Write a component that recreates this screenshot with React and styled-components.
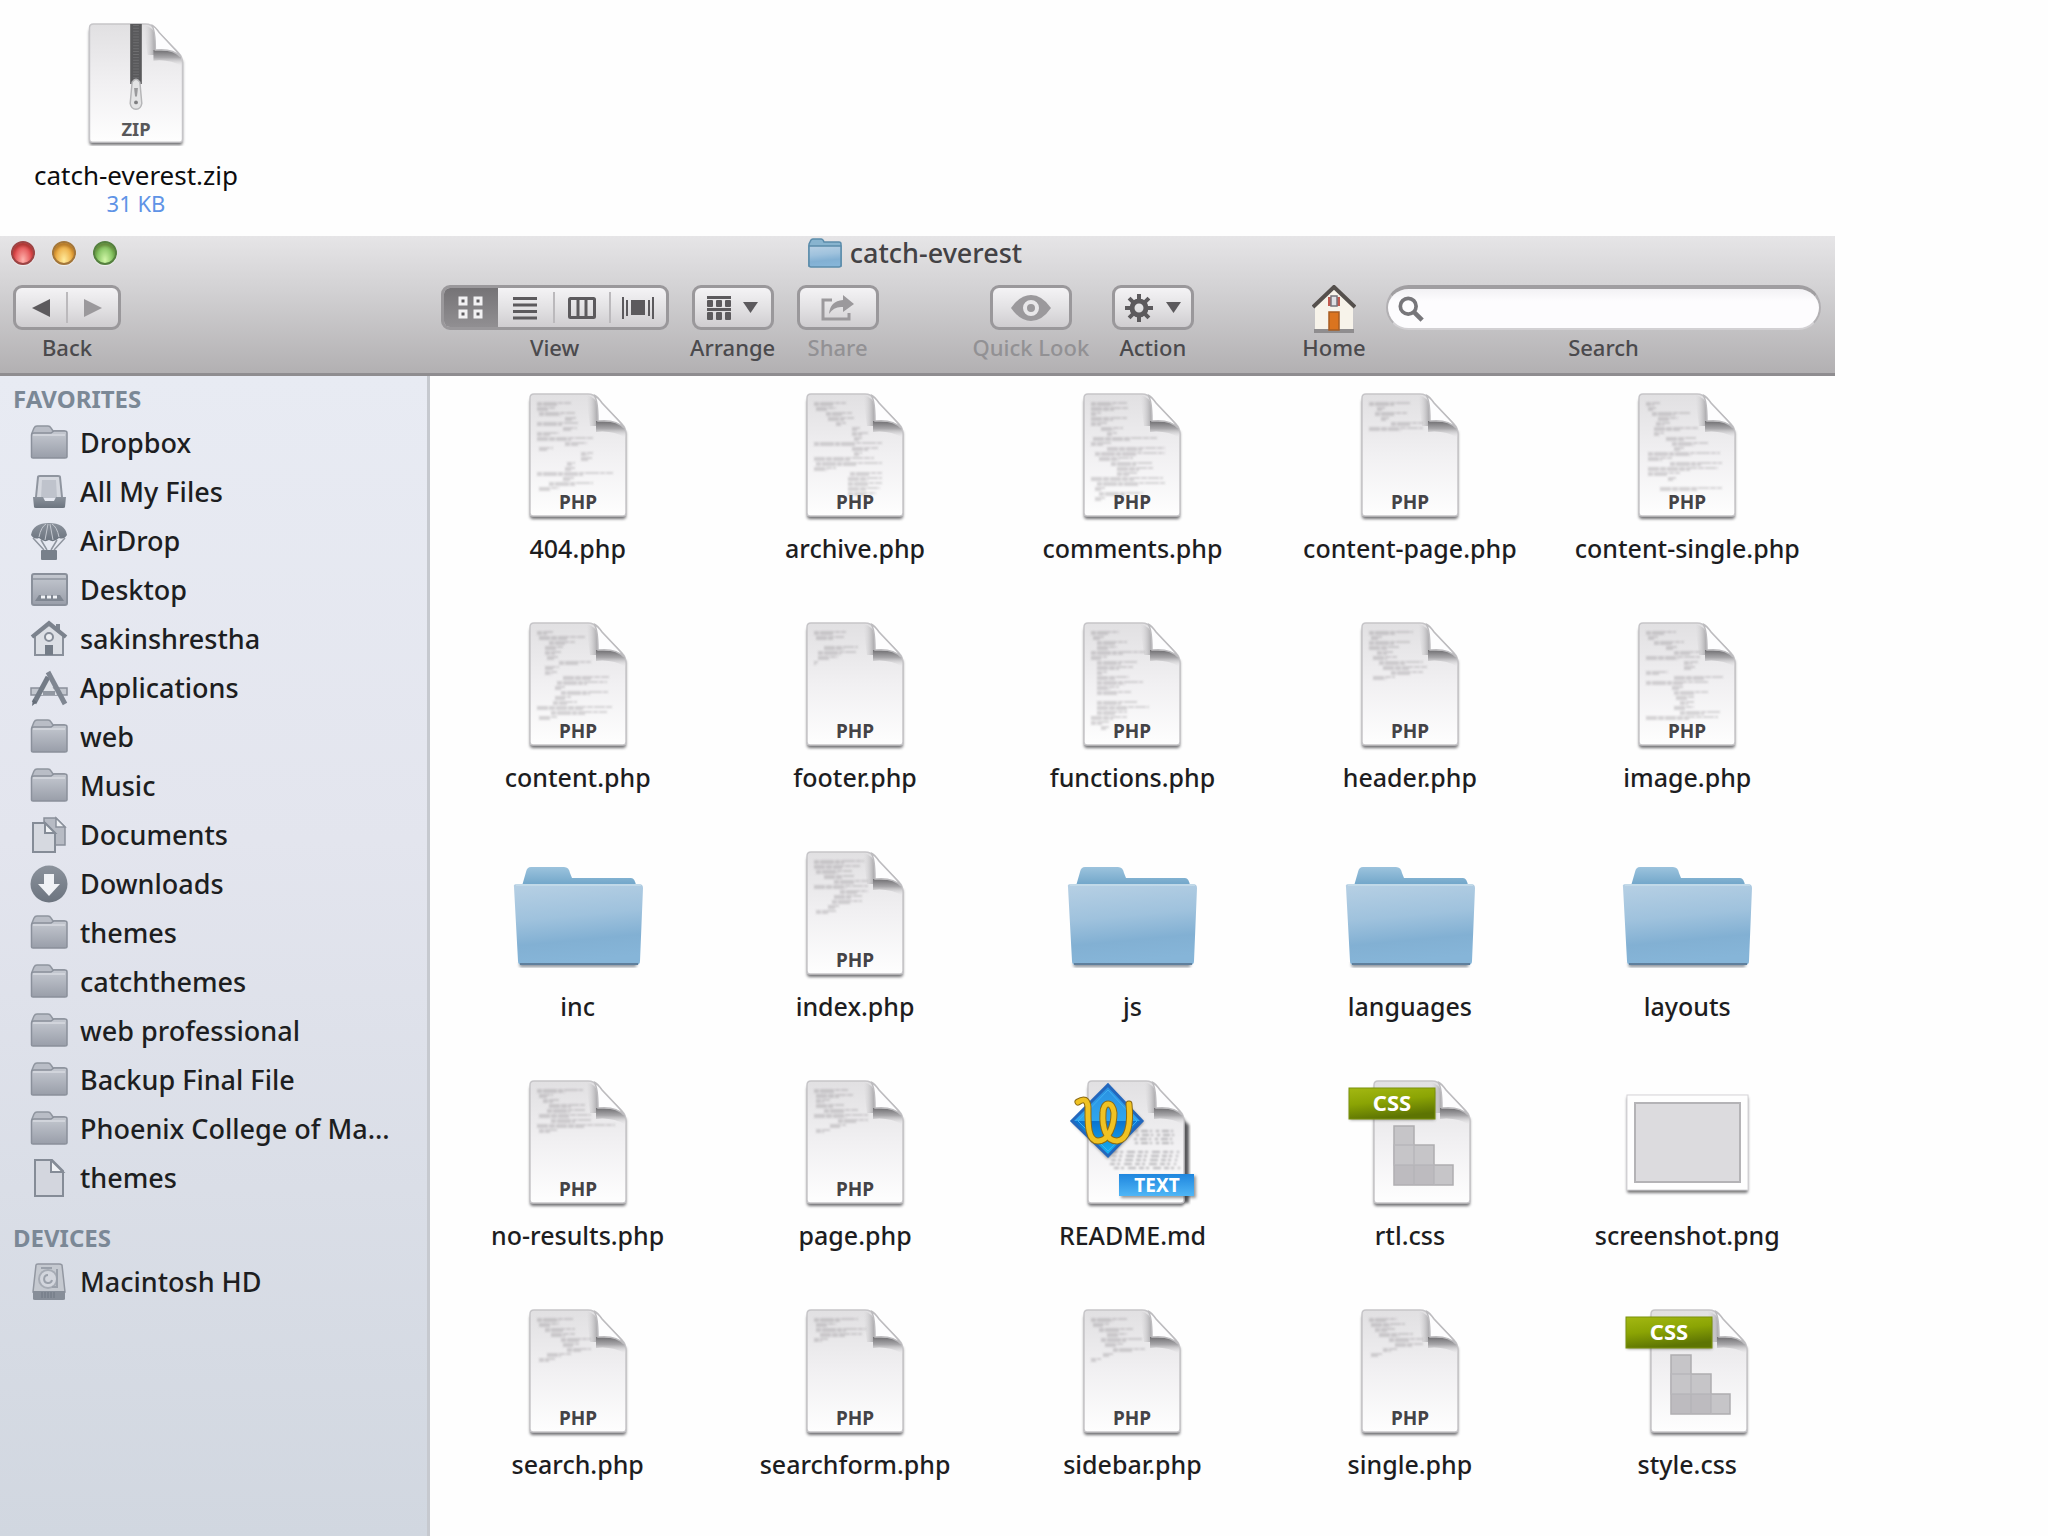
import styled, { createGlobalStyle } from "styled-components";
import { useState } from "react";

const GlobalStyle = createGlobalStyle`
  * {
    box-sizing: border-box;
  }
  body {
    margin: 0;
    background: #fefefe;
    font-family: "Lucida Grande", "Noto Sans", "Open Sans", sans-serif;
    color: #1a1a1c;
  }
`;

const Page = styled.div`
  display: flex;
  flex-direction: column;
  min-height: 100vh;
`;

const Archive = styled.a`
  display: flex;
  flex-direction: column;
  align-items: center;
  width: 272px;
  height: 236px;
  padding-top: 22px;
  color: #0c0c0e;
  font-size: 26px;
  line-height: 32px;
  text-decoration: none;
`;

const ArchiveIcon = styled.svg`
  width: 124px;
  height: 124px;
  margin-bottom: 13px;
`;

const ArchiveSize = styled.span`
  color: #5f93e6;
  font-size: 22px;
  line-height: 24px;
`;

const Window = styled.main`
  display: flex;
  flex-direction: column;
  flex: 1;
  width: 89.6%;
`;

const Header = styled.header`
  height: 140px;
  border-bottom: 3px solid #8f8d90;
  background: linear-gradient(#e6e5e7, #d2d1d3 40%, #b2b0b2);
`;

const TitleBar = styled.div`
  display: grid;
  grid-template-columns: 1fr auto 1fr;
  align-items: center;
  height: 34px;
  padding: 0 16px 0 11px;
`;

const Lights = styled.div`
  display: flex;
  gap: 17px;
`;

const Light = styled.button`
  width: 24px;
  height: 24px;
  padding: 0;
  border: 2px solid ${(p) => p.$edge};
  border-radius: 50%;
  background: radial-gradient(ellipse at 50% 85%, ${(p) => p.$glow}, ${(p) => p.$color} 65%);
  box-shadow: inset 0 3px 3px rgba(60, 20, 0, 0.3), 0 1px 1px rgba(255, 255, 255, 0.6);
`;

const Title = styled.h1`
  display: flex;
  align-items: center;
  gap: 8px;
  margin: 0;
  color: #434245;
  font-size: 27px;
  font-weight: 500;
  line-height: 32px;
`;

const TitleIcon = styled.svg`
  width: 34px;
  height: 30px;
`;

const Toolbar = styled.div`
  display: flex;
  padding: 15px 14px 0 13px;
`;

const Spacer = styled.div`
  flex: ${(p) => p.$grow} 1 0;
`;

const Cluster = styled.div`
  display: flex;
  gap: ${(p) => p.$gap || 23}px;
  flex: ${(p) => (p.$grow ? `${p.$grow} 1 0` : "none")};
`;

const Tool = styled.div`
  display: flex;
  flex-direction: column;
  align-items: center;
  width: ${(p) => (p.$width ? p.$width + "px" : "auto")};
  flex: ${(p) => (p.$width ? "none" : 1)};
`;

const ToolLabel = styled.label`
  margin-top: 1px;
  color: ${(p) => (p.$off ? "#929194" : "#4b4a4d")};
  font-size: 22px;
  font-weight: 500;
  line-height: 32px;
  white-space: nowrap;
`;

const Bezel = styled.div`
  display: flex;
  width: 100%;
  height: 45px;
  overflow: hidden;
  border: 3px solid #9a989b;
  border-radius: 9px;
  background: linear-gradient(#f4f3f5, #e3e2e4 50%, #cfcdd0);
`;

const ToolButton = styled.button`
  display: flex;
  align-items: center;
  justify-content: center;
  gap: 12px;
  flex: 1;
  min-width: 0;
  padding: 0;
  border: 0;
  color: ${(p) => (p.$on ? "#f2f1f3" : p.$off ? "#9b999c" : "#5c5a5d")};
  background: ${(p) => (p.$on ? "linear-gradient(#757376, #918f92)" : "none")};
`;

const Divider = styled.span`
  width: 2px;
  margin: 4px 0;
  background: #bbb9bc;
`;

const HomeButton = styled.button`
  height: 45px;
  padding: 0;
  border: 0;
  background: none;
`;

const SearchField = styled.div`
  display: flex;
  align-items: center;
  width: 100%;
  height: 45px;
  padding: 0 10px;
  border: 2px solid #b2b0b3;
  border-top: 4px solid #a09ea1;
  border-bottom-color: #d2d0d3;
  border-radius: 23px;
  background: linear-gradient(#f2f1f4, #fdfcfe 30%);
`;

const SearchInput = styled.input`
  flex: 1;
  min-width: 0;
  height: 36px;
  border: 0;
  outline: 0;
  background: none;
  font: inherit;
  font-size: 22px;
`;

const Body = styled.div`
  display: flex;
  flex: 1;
`;

const Sidebar = styled.nav`
  flex: none;
  width: 430px;
  padding-top: 4px;
  border-right: 3px solid #c6c9cf;
  background: linear-gradient(#e8ebf3, #e3e5ee 40%, #d1d7e0);
`;

const SideTitle = styled.h2`
  margin: ${(p) => (p.$spaced ? "17px" : "0")} 0 0;
  padding-left: 13px;
  color: #7b8896;
  font-size: 24px;
  font-weight: 700;
  line-height: 38px;
`;

const SideList = styled.ul`
  margin: 0;
  padding: 0;
  list-style: none;
`;

const SideLink = styled.a`
  display: flex;
  align-items: center;
  gap: 12px;
  height: 49px;
  padding: 0 30px;
  color: #1d1e21;
  font-size: 27px;
  font-weight: 500;
  line-height: 32px;
  text-decoration: none;
  white-space: nowrap;
`;

const SideIcon = styled.svg`
  flex: none;
  width: 38px;
  height: 38px;
`;

const Files = styled.ul`
  flex: 1;
  display: grid;
  grid-template-columns: repeat(5, 1fr);
  align-content: start;
  row-gap: 53px;
  margin: 0;
  padding: 16px 9px 0 9px;
  list-style: none;
`;

const FileLink = styled.a`
  display: flex;
  flex-direction: column;
  align-items: center;
  gap: 12px;
  height: 176px;
  color: #1d1d1f;
  font-size: 25px;
  font-weight: 500;
  line-height: 32px;
  text-decoration: none;
  white-space: nowrap;
`;

const FileIcon = styled.svg`
  width: 128px;
  height: 128px;
  overflow: visible;
`;

const SharedDefs = styled.svg`
  display: block;
  width: 0;
  height: 0;
`;

const ICON_FONT = '"Lucida Grande", "Noto Sans", sans-serif';

/* each pair is [indent, length] of one line of code on the page preview */
const files = [
  { name: "404.php", code: [[0, 34], [0, 18], [2, 36], [28, 12], [0, 42], [26, 14], [0, 22], [0, 56], [28, 22], [2, 14], [44, 12], [44, 12], [30, 8], [28, 10], [0, 76], [26, 12], [12, 44], [2, 20]] },
  { name: "archive.php", code: [[0, 32], [2, 20], [12, 26], [14, 26], [22, 10], [38, 8], [38, 32], [40, 8], [0, 68], [38, 26], [40, 8], [0, 60], [2, 66], [0, 22], [36, 32], [34, 34], [34, 34], [34, 32], [34, 28]] },
  { name: "comments.php", code: [[0, 36], [0, 38], [0, 10], [0, 36], [0, 16], [10, 22], [16, 10], [2, 64], [0, 20], [16, 58], [4, 70], [8, 34], [20, 42], [26, 36], [26, 20], [0, 72], [6, 68], [4, 10], [8, 44], [4, 10]] },
  { name: "content-page.php", code: [[0, 42], [8, 8], [6, 32], [12, 8], [22, 38], [0, 70]] },
  { name: "content-single.php", code: [[0, 14], [2, 8], [6, 38], [12, 20], [10, 14], [8, 44], [8, 10], [20, 30], [26, 36], [28, 10], [2, 72], [2, 24], [24, 52], [2, 70], [2, 32], [22, 8], [0, 0], [14, 62]] },
  { name: "content.php", code: [[0, 16], [2, 46], [12, 26], [8, 18], [8, 16], [10, 12], [22, 46], [8, 14], [8, 12], [26, 46], [20, 50], [18, 10], [24, 48], [18, 16], [16, 24], [0, 76], [14, 56], [2, 18]] },
  { name: "footer.php", code: [[0, 32], [2, 28], [0, 0], [10, 34], [4, 38], [4, 20], [0, 4]] },
  { name: "functions.php", code: [[0, 28], [2, 12], [6, 30], [6, 20], [0, 62], [0, 16], [6, 40], [6, 36], [6, 10], [6, 32], [6, 46], [6, 22], [6, 34], [0, 0], [6, 40], [6, 52], [6, 30], [0, 36], [0, 18], [10, 8]] },
  { name: "header.php", code: [[0, 44], [2, 12], [0, 42], [0, 30], [8, 16], [4, 24], [10, 60], [14, 44], [22, 32], [4, 22]] },
  { name: "image.php", code: [[0, 30], [2, 10], [8, 30], [20, 12], [28, 38], [0, 60], [38, 14], [38, 12], [0, 22], [28, 50], [0, 62], [26, 12], [28, 34], [30, 18], [34, 14], [28, 20], [34, 40], [0, 72]] },
  { name: "inc", kind: "folder" },
  { name: "index.php", code: [[0, 50], [0, 46], [2, 36], [10, 30], [20, 34], [0, 72], [26, 50], [20, 28], [18, 30], [14, 12], [2, 20]] },
  { name: "js", kind: "folder" },
  { name: "languages", kind: "folder" },
  { name: "layouts", kind: "folder" },
  { name: "no-results.php", code: [[0, 46], [2, 14], [6, 16], [12, 36], [10, 38], [2, 72], [14, 62], [0, 78], [2, 18]] },
  { name: "page.php", code: [[0, 34], [2, 38], [2, 14], [2, 28], [10, 34], [0, 60], [24, 46], [16, 16], [2, 14]] },
  { name: "README.md", kind: "readme" },
  { name: "rtl.css", kind: "css" },
  { name: "screenshot.png", kind: "image" },
  { name: "search.php", code: [[0, 36], [2, 20], [8, 30], [14, 24], [24, 38], [26, 16], [30, 36], [10, 24], [2, 16]] },
  { name: "searchform.php", code: [[0, 44], [2, 20], [2, 50], [6, 42], [0, 14]] },
  { name: "sidebar.php", code: [[0, 36], [2, 16], [8, 34], [16, 20], [10, 42], [14, 18], [22, 36], [12, 10], [0, 10]] },
  { name: "single.php", code: [[0, 28], [2, 34], [6, 20], [10, 34], [20, 36], [26, 44], [14, 14], [2, 12]] },
  { name: "style.css", kind: "css" },
];

const favorites = [
  ["Dropbox", "folder"],
  ["All My Files", "tray"],
  ["AirDrop", "airdrop"],
  ["Desktop", "desktop"],
  ["sakinshrestha", "house"],
  ["Applications", "apps"],
  ["web", "folder"],
  ["Music", "folder"],
  ["Documents", "documents"],
  ["Downloads", "downloads"],
  ["themes", "folder"],
  ["catchthemes", "folder"],
  ["web professional", "folder"],
  ["Backup Final File", "folder"],
  ["Phoenix College of Ma...", "folder"],
  ["themes", "file"],
];

const Defs = () => (
  <SharedDefs aria-hidden="true">
    <defs>
      <linearGradient id="paper" x1="0" y1="0" x2="0" y2="1">
        <stop offset="0" stopColor="#e1e0e2" />
        <stop offset="0.5" stopColor="#f1f0f2" />
        <stop offset="1" stopColor="#fefefe" />
      </linearGradient>
      <linearGradient id="curlShade" x1="0" y1="0" x2="0" y2="1">
        <stop offset="0" stopColor="#6f6e71" />
        <stop offset="0.45" stopColor="#a9a8ab" />
        <stop offset="1" stopColor="#e9e8ea" stopOpacity="0" />
      </linearGradient>
      <linearGradient id="curlSide" x1="1" y1="0" x2="0" y2="0">
        <stop offset="0" stopColor="#a3a2a5" />
        <stop offset="1" stopColor="#dddcde" stopOpacity="0" />
      </linearGradient>
      <linearGradient id="folderBack" x1="0" y1="0" x2="0" y2="1">
        <stop offset="0" stopColor="#9cc3dd" />
        <stop offset="1" stopColor="#6ea4c8" />
      </linearGradient>
      <linearGradient id="folderFront" x1="0" y1="0" x2="0.15" y2="1">
        <stop offset="0" stopColor="#b7d0e4" />
        <stop offset="0.45" stopColor="#9fc2dd" />
        <stop offset="0.75" stopColor="#82b0d3" />
        <stop offset="1" stopColor="#86b5d8" />
      </linearGradient>
      <linearGradient id="sideGray" x1="0" y1="0" x2="0" y2="1">
        <stop offset="0" stopColor="#c5c9d1" />
        <stop offset="1" stopColor="#999ea9" />
      </linearGradient>
      <linearGradient id="sideDark" x1="0" y1="0" x2="0" y2="1">
        <stop offset="0" stopColor="#8b929c" />
        <stop offset="1" stopColor="#6c747f" />
      </linearGradient>
      <linearGradient id="cssGreen" x1="0" y1="0" x2="0.3" y2="1">
        <stop offset="0" stopColor="#a3b812" />
        <stop offset="0.5" stopColor="#8ba404" />
        <stop offset="1" stopColor="#5d7403" />
      </linearGradient>
      <linearGradient id="diamond" x1="0" y1="0" x2="0" y2="1">
        <stop offset="0" stopColor="#2b8fe0" />
        <stop offset="0.5" stopColor="#2ea6ef" />
        <stop offset="0.51" stopColor="#0a73cf" />
        <stop offset="1" stopColor="#19b4f2" />
      </linearGradient>
      <linearGradient id="textTag" x1="0" y1="0" x2="0" y2="1">
        <stop offset="0" stopColor="#1f86de" />
        <stop offset="1" stopColor="#4fb6f6" />
      </linearGradient>
      <filter id="soft" x="-20%" y="-20%" width="140%" height="140%">
        <feGaussianBlur stdDeviation="1.5" />
      </filter>
      <filter id="faint" x="-10%" y="-10%" width="120%" height="120%">
        <feGaussianBlur stdDeviation="0.9" />
      </filter>
    </defs>
  </SharedDefs>
);

const Paper = ({ shift = 0 }) => (
  <g transform={`translate(${shift} 0)`}>
    <path d="M16 8 L16 124 Q16 127 19 127 L109 127 Q112 127 112 124 L112 40 Z" fill="#57565a" opacity="0.85" filter="url(#soft)" />
    <path d="M16 6 Q16 2 20 2 L74 2 Q80 2 84 7 L108 32 Q112 36 112 42 L112 121 Q112 124 109 124 L19 124 Q16 124 16 121 Z" fill="url(#paper)" stroke="#c6c5c8" strokeWidth="1.5" />
    <path d="M72 3 Q82 5 84 14 L84 34 L76 34 Z" fill="url(#curlSide)" />
    <path d="M82 29 L104 30 Q112 33 112 46 Q98 38 82 40 Z" fill="url(#curlShade)" />
    <path d="M80 3 Q84 8 84 29 Q102 27 110 36 Q108 32 104 28 L88 11 Q84 5 80 3 Z" fill="#fdfdfe" stroke="#bdbcbf" strokeWidth="1.5" />
  </g>
);

const PhpArt = ({ code }) => (
  <>
    <Paper />
    <g stroke="#6f6e73" filter="url(#faint)">
      {code.map(([x, w], i) => {
        const y = 11 + i * 5;
        const length = Math.min(w, (y < 42 ? 54 : 84) - x);
        return (
          <path
            key={i}
            d={`M${23 + x} ${y} h${length} M${23 + x} ${y + 2} h${Math.round(length * 0.6)}`}
            strokeWidth="1.5"
            strokeDasharray={i % 2 ? "11 1 6 1" : "5 1 14 1"}
            opacity="0.35"
          />
        );
      })}
    </g>
    <text x="64" y="117" textAnchor="middle" fontFamily={ICON_FONT} fontSize="19" fontWeight="700" fill="#444346">PHP</text>
  </>
);

const FolderArt = () => (
  <>
    <path d="M5 113 L123 113 L122 117 L6 117 Z" fill="#55606c" opacity="0.7" filter="url(#soft)" />
    <path d="M8 36 L12 22 Q13 17 17 17 L50 17 Q55 17 56 23 L58 28 L117 28 Q121 28 122 36 Z" fill="url(#folderBack)" />
    <path d="M0 37 Q-1 34 3 34 L125 34 Q129 34 129 38 L126 111 Q126 115 122 115 L8 115 Q4 115 4 111 Z" fill="url(#folderFront)" />
    <path d="M2 35 H127" stroke="#c6dcea" strokeWidth="1.5" />
    <path d="M6 114 H124" stroke="#5f7f9c" strokeWidth="2" />
  </>
);

const CssArt = () => (
  <>
    <Paper shift={12} />
    <g stroke="#aeadb0" strokeWidth="1.5">
      <path d="M48 47 h20 v19 h20 v20 h19 v20 h-59 z" fill="#c6c5c8" />
      <path d="M48 66 h20 v20 h-20 z M68 66 v20 h20 v20 M48 86 h20 v20 M68 86 h20" fill="none" stroke="#b8b7ba" />
    </g>
    <path d="M48 86 h40 v20 h-40 z" fill="#b3b2b5" opacity="0.5" />
    <rect x="4" y="11" width="85" height="30" fill="#333" opacity="0.5" filter="url(#soft)" />
    <rect x="3" y="9" width="86" height="31" fill="url(#cssGreen)" stroke="#7b910c" strokeWidth="1" />
    <text x="46" y="32" textAnchor="middle" fontFamily={ICON_FONT} fontSize="22" fontWeight="700" fill="#fff">CSS</text>
  </>
);

const SCRAWL = "M10 23 Q19 17 20 28 C20 42 19 62 30 62 C41 62 46 46 46 34 C45 22 35 22 35 34 C34 48 38 62 49 62 C60 61 63 45 61 25";

const ReadmeArt = () => (
  <>
    <path d="M112 38 L121 46 V124 H112 Z" fill="#2f2f33" opacity="0.8" filter="url(#soft)" />
    <Paper shift={4} />
    <g stroke="#77767a" strokeWidth="2" opacity="0.5" filter="url(#faint)">
      {[52, 56, 60, 64].map((y) => (
        <path key={y} d={`M${66 + (y % 3)} ${y} h40`} strokeDasharray="3 3 7 2 2 4" />
      ))}
      {[73, 77, 81, 85, 89].map((y) => (
        <path key={y} d={`M${42 + (y % 5)} ${y} h66`} strokeDasharray="5 2 3 4 8 3" />
      ))}
    </g>
    <path d="M40 6 L76 43 L40 80 L4 43 Z" fill="#333" opacity="0.5" filter="url(#soft)" />
    <path d="M40 6 L74 42 L40 77 L4 42 Z" fill="url(#diamond)" stroke="#2367bd" strokeWidth="3" />
    <path d="M40 11 L69 42 L40 72 L10 42 Z" fill="none" stroke="#3fb0f2" strokeWidth="1" />
    <g fill="none" strokeLinecap="round" strokeLinejoin="round">
      <path d={SCRAWL} stroke="#8c6b14" strokeWidth="7" />
      <path d={SCRAWL} stroke="#f0c222" strokeWidth="5" />
    </g>
    <rect x="53" y="97" width="75" height="22" fill="#333" opacity="0.5" filter="url(#soft)" />
    <rect x="51" y="95" width="75" height="22" fill="url(#textTag)" />
    <text x="89" y="113" textAnchor="middle" fontFamily={ICON_FONT} fontSize="19" fontWeight="700" fill="#fff">TEXT</text>
  </>
);

const ImageArt = () => (
  <>
    <rect x="4" y="18" width="121" height="96" rx="2" fill="#606063" opacity="0.85" filter="url(#soft)" />
    <rect x="4" y="16" width="121" height="95" fill="#fefefe" stroke="#d5d4d7" strokeWidth="1" />
    <rect x="12" y="24" width="105" height="79" fill="#dcdbde" stroke="#b4b3b6" strokeWidth="2" />
  </>
);

const ZipArt = () => (
  <>
    <Paper />
    <path d="M58 2 h12 v62 h-12 z" fill="#59595b" />
    <path d="M64 3 v60" stroke="#6f6f71" strokeWidth="6" strokeDasharray="1 2" />
    <path d="M60 62 q4 -6 8 0 l2 22 q-1 6 -6 6 q-5 0 -6 -6 z" fill="#e4e4e5" stroke="#b5b5b7" strokeWidth="1.5" />
    <path d="M62 68 h4 l-1 9 h-2 z" fill="#9a9a9c" />
    <circle cx="64" cy="83" r="2" fill="#7e7e80" />
    <text x="64" y="118" textAnchor="middle" fontFamily={ICON_FONT} fontSize="19" fontWeight="700" fill="#58585a">ZIP</text>
  </>
);

const art = { folder: FolderArt, css: CssArt, readme: ReadmeArt, image: ImageArt };

const File = ({ name, kind, code }) => {
  const Art = art[kind] || PhpArt;
  return (
    <li>
      <FileLink href="#">
        <FileIcon viewBox="0 0 128 128" aria-hidden="true">
          <Art code={code} />
        </FileIcon>
        {name}
      </FileLink>
    </li>
  );
};

const sideArt = {
  folder: (
    <>
      <path d="M2 9 L4 4 Q5 2 7 2 H18 Q20 2 21 4 L23 7 H34 V14 H2 Z" fill="#b9bdc6" stroke="#8f959f" strokeWidth="1.5" />
      <path d="M1.5 11 Q1.5 9 4 9 L21 9 L24 7 H35 Q37 7 37 9 V33 Q37 34 35 34 H3 Q1.5 34 1.5 33 Z" fill="url(#sideGray)" stroke="#8a909b" strokeWidth="1.5" />
      <path d="M3 11 H35" stroke="#d7dae0" strokeWidth="1.5" />
    </>
  ),
  tray: (
    <>
      <path d="M6 24 L8 4 Q8 3 10 3 H28 Q30 3 30 4 L32 24" fill="#d5d8df" stroke="#8f959f" strokeWidth="2" />
      <path d="M12 7 H26 L27 25 H11 Z" fill="#bfc3cc" />
      <path d="M3 24 H13 L15 28 H24 L26 24 H36 L35 34 Q35 35 33 35 H6 Q4 35 4 34 Z" fill="url(#sideDark)" />
    </>
  ),
  airdrop: (
    <>
      <path d="M1 13 Q3 1 19 1 Q35 1 37 13 Q34 18 29 16 Q24 21 19 18 Q14 21 9 16 Q4 18 1 13 Z" fill="url(#sideDark)" />
      <path d="M9 15 Q11 5 16 2 M29 15 Q27 5 22 2 M15 18 L18 2 M23 18 L20 2" stroke="#c4c8d0" fill="none" />
      <path d="M3 16 L14 28 M35 16 L24 28 M11 18 L17 28 M27 18 L21 28" stroke="#8f959f" strokeWidth="1.5" />
      <rect x="11" y="28" width="16" height="10" rx="1" fill="#78808b" />
    </>
  ),
  desktop: (
    <>
      <rect x="2" y="3" width="35" height="31" rx="2" fill="url(#sideGray)" stroke="#8a909b" strokeWidth="2" />
      <path d="M3 8 H36" stroke="#8f959f" strokeWidth="1.5" />
      <path d="M9 24 H30 L34 30 H5 Z" fill="#7f8691" />
      <path d="M11 26 h4 M17 26 h4 M23 26 h4" stroke="#f0f2f6" strokeWidth="3" />
    </>
  ),
  house: (
    <>
      <path d="M26 4 h4 v8 h-4 z" fill="#7f8691" />
      <path d="M5 16 V35 H33 V16 L19 5 Z" fill="#dcdfe5" stroke="#8a909b" strokeWidth="2" />
      <path d="M2 17 L19 3 L36 17" fill="none" stroke="#7b828d" strokeWidth="4" />
      <circle cx="19" cy="17" r="4" fill="#eceef2" stroke="#858c97" strokeWidth="2" />
      <path d="M15 25 h8 v10 h-8 z" fill="#747c87" />
    </>
  ),
  apps: (
    <>
      <path d="M1 19 H37 V26 H1 Z" fill="#c3c7cf" stroke="#8a909b" strokeWidth="1.5" />
      <path d="M18 10 L10 26 H27 Z" fill="#dfe2e8" />
      <path d="M18 8 L4 34" stroke="#737b86" strokeWidth="5" />
      <path d="M18 3 L35 35" stroke="#7f8691" strokeWidth="5" />
      <path d="M13 24 H25" stroke="#9298a2" strokeWidth="4" />
      <path d="M3 30 L2 37 L7 33 Z" fill="#656d78" />
    </>
  ),
  documents: (
    <>
      <path d="M14 2 H26 L35 11 V29 H14 Z" fill="#b7bbc4" stroke="#8a909b" strokeWidth="1.5" />
      <path d="M26 2 V11 H35 Z" fill="#eef0f4" stroke="#8a909b" strokeWidth="1.5" />
      <path d="M3 7 H15 L25 17 V36 H3 Z" fill="#d6d9e0" stroke="#858c97" strokeWidth="2" />
      <path d="M15 7 V17 H25 Z" fill="#f1f3f6" stroke="#858c97" strokeWidth="2" />
    </>
  ),
  downloads: (
    <>
      <circle cx="19" cy="19" r="18.5" fill="url(#sideDark)" />
      <path d="M14 9 H24 V19 H30 L19 31 L8 19 H14 Z" fill="#f0f2f6" />
    </>
  ),
  file: (
    <>
      <path d="M5 1 H22 L33 12 V37 H5 Z" fill="#d3d6de" stroke="#858c97" strokeWidth="2" />
      <path d="M21 1 V13 H33 Z" fill="#f1f3f6" stroke="#858c97" strokeWidth="2" />
    </>
  ),
  disk: (
    <>
      <path d="M6 2 Q6 1 8 1 H29 Q31 1 32 2 L35 29 H3 Z" fill="#c5c9d0" stroke="#9297a1" strokeWidth="1.5" />
      <circle cx="18" cy="16" r="9" fill="#d3d6dd" stroke="#a7acb5" strokeWidth="2" />
      <path d="M11 5 H22 M27 6 V24 H22 M18 12 A4 4 0 1 0 22 17" fill="none" stroke="#9ba1ab" strokeWidth="2" />
      <path d="M3 28 H35 V36 Q35 37 33 37 H5 Q3 37 3 36 Z" fill="#878e99" />
      <path d="M12 29 V35 M15 29 V35 M18 29 V35 M21 29 V35 M24 29 V35" stroke="#6f7782" />
    </>
  ),
};

const SideItem = ({ name, icon }) => (
  <li>
    <SideLink href="#">
      <SideIcon viewBox="0 0 38 38" aria-hidden="true">{sideArt[icon]}</SideIcon>
      {name}
    </SideLink>
  </li>
);

const Caret = () => (
  <svg width="15" height="11" viewBox="0 0 15 11" aria-hidden="true">
    <path d="M0 0 H15 L7.5 11 Z" fill="currentColor" />
  </svg>
);

const views = {
  Icons: (
    <svg width="26" height="24" viewBox="0 0 26 24" fill="#5d5b5e" stroke="currentColor" strokeWidth="3">
      <rect x="2" y="2" width="6" height="6" />
      <rect x="17" y="2" width="6" height="6" />
      <rect x="2" y="15" width="6" height="6" />
      <rect x="17" y="15" width="6" height="6" />
    </svg>
  ),
  List: (
    <svg width="24" height="24" viewBox="0 0 24 24" stroke="currentColor" strokeWidth="3">
      <path d="M0 2.5 H24 M0 9 H24 M0 15.5 H24 M0 22 H24" />
    </svg>
  ),
  Columns: (
    <svg width="28" height="22" viewBox="0 0 28 22" fill="none" stroke="currentColor" strokeWidth="3">
      <rect x="1.5" y="1.5" width="25" height="19" rx="1" />
      <path d="M10 2 V20 M18 2 V20" />
    </svg>
  ),
  "Cover Flow": (
    <svg width="32" height="22" viewBox="0 0 32 22" stroke="currentColor" strokeWidth="2">
      <rect x="10" y="4" width="12" height="13" fill="currentColor" />
      <path d="M1 0 V22 M5 3 V19 M27 3 V19 M31 0 V22" />
    </svg>
  ),
};

const App = () => {
  const [view, setView] = useState("Icons");
  const [query, setQuery] = useState("");

  return (
    <Page>
      <GlobalStyle />
      <Defs />
      <Archive href="#">
        <ArchiveIcon viewBox="0 0 128 128" aria-hidden="true">
          <ZipArt />
        </ArchiveIcon>
        catch-everest.zip
        <ArchiveSize>31 KB</ArchiveSize>
      </Archive>

      <Window>
        <Header>
          <TitleBar>
            <Lights>
              <Light aria-label="Close" $edge="#9c4444" $color="#e0484b" $glow="#ffb3ad" />
              <Light aria-label="Minimize" $edge="#a3763a" $color="#eaa63b" $glow="#ffeb9c" />
              <Light aria-label="Zoom" $edge="#55803f" $color="#79bb57" $glow="#d2f7a8" />
            </Lights>
            <Title>
              <TitleIcon viewBox="0 0 34 30" aria-hidden="true">
                <path d="M1 6 L3 2 Q4 1 5 1 H13 Q15 1 16 4 H31 Q33 4 33 6 V28 H1 Z" fill="#88b4cf" stroke="#5b8cab" strokeWidth="1.5" />
                <path d="M1 8 H33 V27 Q33 29 31 29 H3 Q1 29 1 27 Z" fill="url(#folderFront)" stroke="#5b8cab" strokeWidth="1.5" />
              </TitleIcon>
              catch-everest
            </Title>
          </TitleBar>

          <Toolbar>
            <Tool $width={108}>
              <Bezel>
                <ToolButton id="back" aria-label="Back">
                  <svg width="18" height="18" viewBox="0 0 18 18"><path d="M18 0 V18 L0 9 Z" fill="currentColor" /></svg>
                </ToolButton>
                <Divider />
                <ToolButton aria-label="Forward" $off>
                  <svg width="18" height="18" viewBox="0 0 18 18"><path d="M0 0 V18 L18 9 Z" fill="currentColor" /></svg>
                </ToolButton>
              </Bezel>
              <ToolLabel htmlFor="back">Back</ToolLabel>
            </Tool>
            <Spacer $grow={319} />
            <Cluster>
              <Tool $width={228}>
                <Bezel>
                  {Object.keys(views).map((name, i) => [
                    i > 1 && <Divider key={name + "-line"} />,
                    <ToolButton
                      key={name}
                      id={"view-" + i}
                      aria-label={name}
                      aria-pressed={view === name}
                      $on={view === name}
                      onClick={() => setView(name)}
                    >
                      {views[name]}
                    </ToolButton>,
                  ])}
                </Bezel>
                <ToolLabel htmlFor="view-0">View</ToolLabel>
              </Tool>
              <Tool $width={82}>
                <Bezel>
                  <ToolButton id="arrange">
                    <svg width="24" height="24" viewBox="0 0 24 24" fill="currentColor" aria-hidden="true">
                      <path d="M0 0 h24 v3 h-24 z M0 12 h24 v3 h-24 z" />
                      {[0, 9, 18].map((x) => (
                        <g key={x}>
                          <rect x={x} y="4" width="6" height="7" rx="1" />
                          <rect x={x} y="16" width="6" height="8" rx="1" />
                        </g>
                      ))}
                    </svg>
                    <Caret />
                  </ToolButton>
                </Bezel>
                <ToolLabel htmlFor="arrange">Arrange</ToolLabel>
              </Tool>
              <Tool $width={82}>
                <Bezel>
                  <ToolButton id="share" $off>
                    <svg width="34" height="28" viewBox="0 0 34 28" aria-hidden="true">
                      <path d="M11 6 H2 V25 H28 V19" fill="none" stroke="currentColor" strokeWidth="3" />
                      <path d="M8 20 Q9 7 22 6 V1 L33 10 L22 18 V13 Q13 12 8 20 Z" fill="currentColor" />
                    </svg>
                  </ToolButton>
                </Bezel>
                <ToolLabel htmlFor="share" $off>Share</ToolLabel>
              </Tool>
            </Cluster>
            <Spacer $grow={111} />
            <Cluster $gap={40}>
              <Tool $width={82}>
                <Bezel>
                  <ToolButton id="quick-look" $off>
                    <svg width="40" height="26" viewBox="0 0 40 26" aria-hidden="true">
                      <path d="M0 13 Q9 0 20 0 Q31 0 40 13 Q31 26 20 26 Q9 26 0 13 Z" fill="currentColor" />
                      <circle cx="20" cy="13" r="6" fill="none" stroke="#e8e7e9" strokeWidth="4" />
                    </svg>
                  </ToolButton>
                </Bezel>
                <ToolLabel htmlFor="quick-look" $off>Quick Look</ToolLabel>
              </Tool>
              <Tool $width={82}>
                <Bezel>
                  <ToolButton id="action">
                    <svg width="30" height="30" viewBox="-15 -15 30 30" stroke="currentColor" aria-hidden="true">
                      <circle r="7" fill="none" strokeWidth="5" />
                      {[0, 45, 90, 135, 180, 225, 270, 315].map((a) => (
                        <path key={a} d="M0 -8 V-14" strokeWidth="4" transform={`rotate(${a})`} />
                      ))}
                    </svg>
                    <Caret />
                  </ToolButton>
                </Bezel>
                <ToolLabel htmlFor="action">Action</ToolLabel>
              </Tool>
            </Cluster>
            <Spacer $grow={118} />
            <Cluster $gap={30} $grow={508}>
              <Tool $width={44}>
                <HomeButton id="home">
                  <svg width="44" height="48" viewBox="0 0 44 48" aria-hidden="true">
                    <path d="M2 44 H42 V48 H2 Z" fill="#8f8d8f" />
                    <path d="M3 20 L22 3 L41 20 V44 H3 Z" fill="#f7f3ea" />
                    <path d="M1 22 L22 2 L43 22" fill="none" stroke="#55504d" strokeWidth="4" />
                    <path d="M16 12 h12 v9 h-12 z" fill="#c05a50" />
                    <path d="M19 11 h6 v10 h-6 z" fill="#dfe0e4" stroke="#77757c" strokeWidth="1.5" />
                    <path d="M17 27 h10 v18 h-10 z" fill="#db741f" stroke="#a85c22" strokeWidth="1.5" />
                  </svg>
                </HomeButton>
                <ToolLabel htmlFor="home">Home</ToolLabel>
              </Tool>
              <Tool>
                <SearchField>
                  <svg width="26" height="26" viewBox="0 0 28 28" fill="none" stroke="#77767a" aria-hidden="true">
                    <circle cx="11" cy="11" r="8.5" strokeWidth="4" />
                    <path d="M17 17 L26 26" strokeWidth="5" />
                  </svg>
                  <SearchInput id="search" type="text" value={query} onChange={(e) => setQuery(e.target.value)} />
                </SearchField>
                <ToolLabel htmlFor="search">Search</ToolLabel>
              </Tool>
            </Cluster>
          </Toolbar>
        </Header>

        <Body>
          <Sidebar>
            <SideTitle>FAVORITES</SideTitle>
            <SideList>
              {favorites.map(([name, icon], i) => (
                <SideItem key={i} name={name} icon={icon} />
              ))}
            </SideList>
            <SideTitle $spaced>DEVICES</SideTitle>
            <SideList>
              <SideItem name="Macintosh HD" icon="disk" />
            </SideList>
          </Sidebar>
          <Files>
            {files.map((file) => (
              <File key={file.name} {...file} />
            ))}
          </Files>
        </Body>
      </Window>
    </Page>
  );
};

export default App;
